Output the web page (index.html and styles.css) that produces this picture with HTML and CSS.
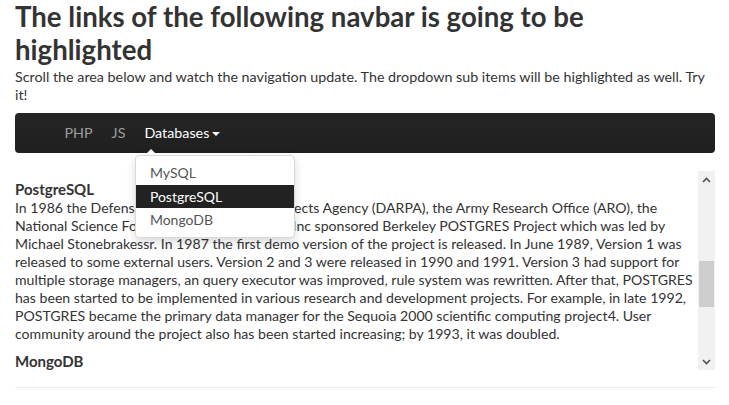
FILE: index.html
```html
<!DOCTYPE html>
<html lang="en">
<head>
<meta charset="utf-8">
<title>Scrollspy navbar</title>
<link rel="stylesheet" href="styles.css">
</head>
<body>
<div class="page">
  <h1 class="title">The links of the following navbar is going to be highlighted</h1>
  <p class="lead">Scroll the area below and watch the navigation update. The dropdown sub items will be highlighted as well. Try it!</p>

  <nav class="navbar">
    <ul class="nav">
      <li class="nav-item">PHP</li>
      <li class="nav-item">JS</li>
      <li class="nav-item active dropdown">
        Databases<span class="caret"></span>
        <ul class="dropdown-menu">
          <li class="dd-item">MySQL</li>
          <li class="dd-item current">PostgreSQL</li>
          <li class="dd-item">MongoDB</li>
        </ul>
      </li>
    </ul>
  </nav>

  <div class="scroll-box">
    <div class="scroll-content">
      <h4 class="section-title">PostgreSQL</h4>
      <p class="section-text">In 1986 the Defense Advanced Research Projects Agency (DARPA), the Army Research Office (ARO), the National Science Foundation (NSF), and ESL, Inc sponsored Berkeley POSTGRES Project which was led by Michael Stonebrakessr. In 1987 the first demo version of the project is released. In June 1989, Version 1 was released to some external users. Version 2 and 3 were released in 1990 and 1991. Version 3 had support for multiple storage managers, an query executor was improved, rule system was rewritten. After that, POSTGRES has been started to be implemented in various research and development projects. For example, in late 1992, POSTGRES became the primary data manager for the Sequoia 2000 scientific computing project4. User community around the project also has been started increasing; by 1993, it was doubled.</p>
      <h4 class="section-title">MongoDB</h4>
    </div>
    <div class="scrollbar">
      <div class="sb-arrow">
        <svg width="9" height="6" viewBox="0 0 9 6"><path d="M1 5 L4.5 1.5 L8 5" fill="none" stroke="#505050" stroke-width="1.6"/></svg>
      </div>
      <div class="sb-track">
        <div class="sb-thumb"></div>
      </div>
      <div class="sb-arrow">
        <svg width="9" height="6" viewBox="0 0 9 6"><path d="M1 1 L4.5 4.5 L8 1" fill="none" stroke="#505050" stroke-width="1.6"/></svg>
      </div>
    </div>
  </div>

  <hr class="rule">
</div>
</body>
</html>
```

FILE: styles.css
```css
* { box-sizing: border-box; }
html, body { margin: 0; padding: 0; background: #fff; }
body {
  font-family: Lato, "Open Sans", sans-serif;
  font-size: 14.3px;
  line-height: 18px;
  color: #333;
}
.page { padding: 0 14px 0 15px; }
.title {
  margin: 0 0 2px;
  font-size: 27.6px;
  line-height: 33px;
  font-weight: 700;
  color: #333;
}
.lead { margin: 0 0 9px; }

.navbar {
  height: 40px;
  background: linear-gradient(#262626, #1f1f1f);
  border-radius: 4px;
  padding-left: 40px;
}
.nav {
  list-style: none;
  margin: 0;
  padding: 0;
  display: flex;
  height: 100%;
  align-items: center;
}
.nav-item {
  padding: 0 9.5px;
  color: #9d9d9d;
  position: relative;
  line-height: 40px;
}
.nav-item.active { color: #fff; }
.caret {
  display: inline-block;
  width: 0; height: 0;
  margin-left: 3px;
  vertical-align: middle;
  border-top: 4px solid #fff;
  border-left: 4px solid transparent;
  border-right: 4px solid transparent;
}
.dropdown-menu {
  position: absolute;
  left: 0;
  top: 42px;
  width: 160px;
  margin: 0;
  padding: 5px 0;
  list-style: none;
  background: #fff;
  border: 1px solid #d9d9d9;
  border-radius: 4px;
  box-shadow: 0 4px 10px rgba(0,0,0,0.15);
  z-index: 2;
}
.dropdown-menu::before {
  content: "";
  position: absolute;
  left: 9px;
  top: -7px;
  width: 0; height: 0;
  border-bottom: 6px solid #fff;
  border-left: 6px solid transparent;
  border-right: 6px solid transparent;
}
.dd-item {
  padding: 0 14px;
  line-height: 23.5px;
  font-size: 14px;
  color: #555;
}
.dd-item.current { background: #222; color: #fff; }

.scroll-box {
  margin-top: 18px;
  height: 199px;
  display: flex;
}
.scroll-content {
  flex: 1;
  overflow: hidden;
  padding-top: 8px;
}
.section-title {
  margin: 0;
  font-size: 15px;
  line-height: 20px;
  font-weight: 700;
  color: #333;
}
.section-text { margin: 0 0 8px; font-size: 14.1px; }
.scrollbar {
  width: 17px;
  background: #f1f1f1;
  display: flex;
  flex-direction: column;
}
.sb-arrow {
  height: 17px;
  display: flex;
  align-items: center;
  justify-content: center;
}
.sb-track { flex: 1; position: relative; }
.sb-thumb {
  position: absolute;
  left: 1px; right: 1px;
  top: 73px;
  height: 46px;
  background: #cdcdcd;
}
.rule {
  margin: 17px 0 0;
  border: 0;
  border-top: 1px solid #eee;
}
```
